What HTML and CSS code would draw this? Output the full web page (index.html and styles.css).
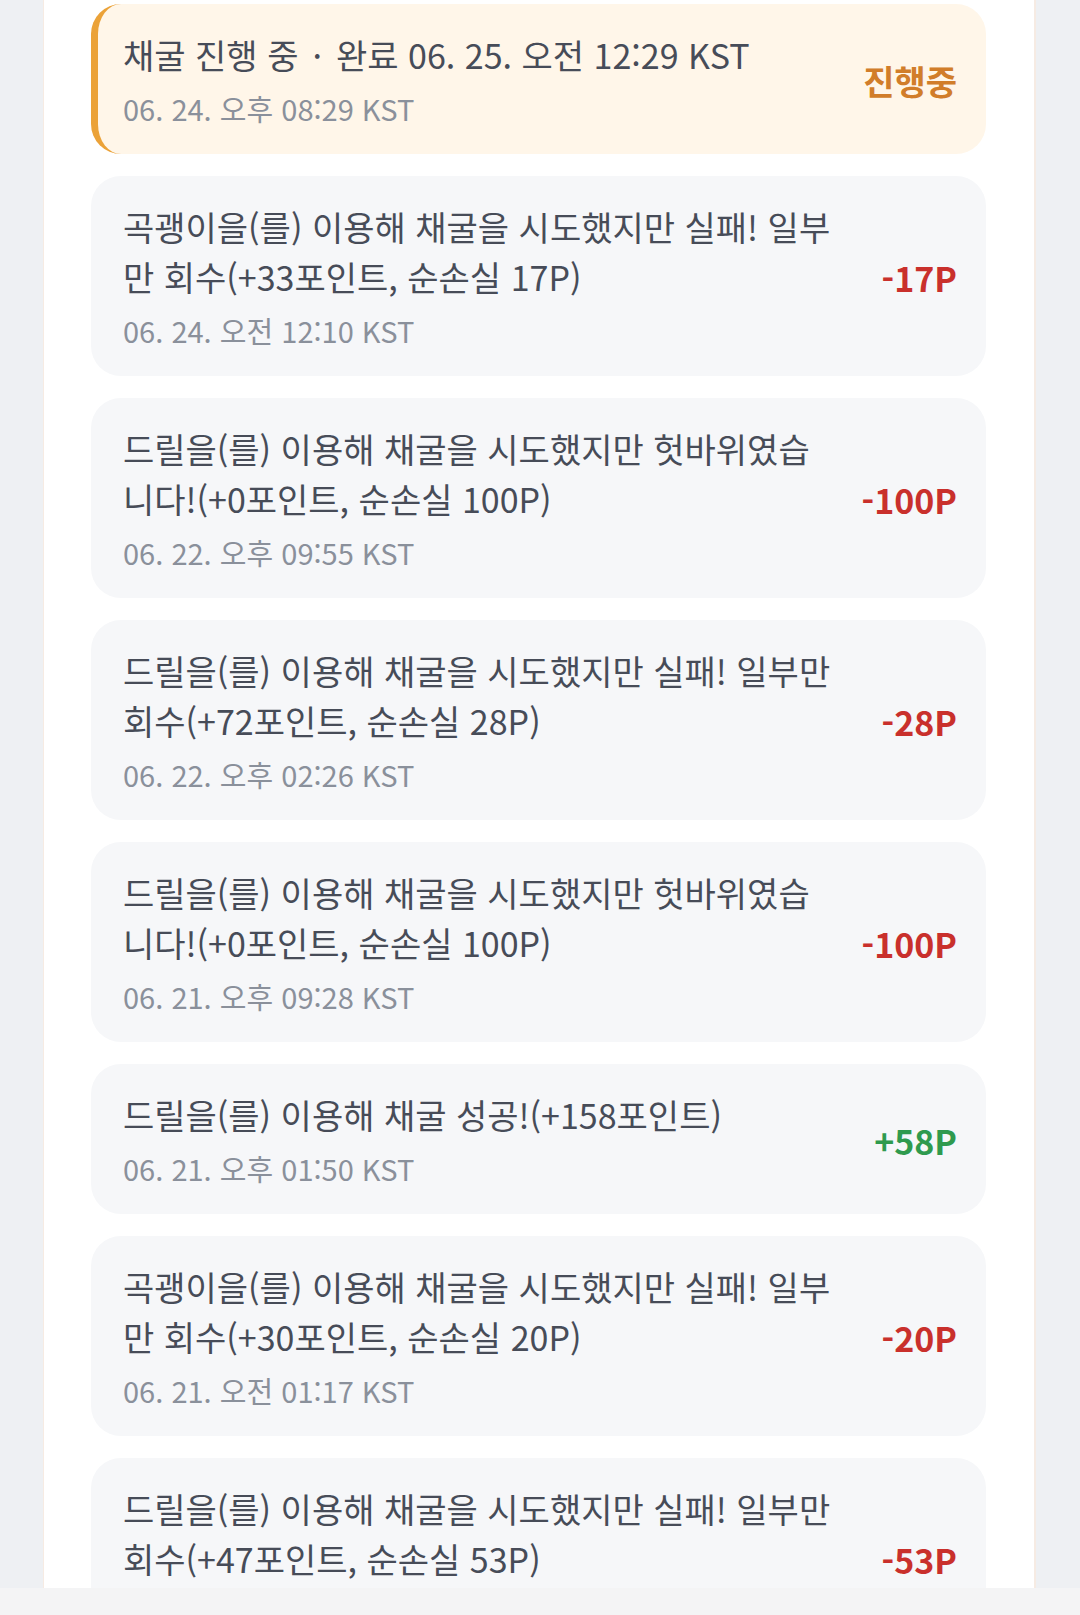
FILE: index.html
```html
<!DOCTYPE html>
<html lang="ko">
<head>
    <meta charset="UTF-8">
    <meta name="viewport" content="width=device-width, initial-scale=1.0">
    <title>채굴 기록</title>
    <link rel="stylesheet" href="styles.css">
</head>
<body>

    <div class="page">
        <div class="panel">
            <div class="log-item active">
                <div class="log-text">
                    <div class="log-desc">채굴 진행 중<span class="dot">·</span>완료 06. 25. 오전 12:29 KST</div>
                    <div class="log-date">06. 24. 오후 08:29 KST</div>
                </div>
                <div class="log-status">진행중</div>
            </div>
            <div class="log-item">
                <div class="log-text">
                    <div class="log-desc">곡괭이을(를) 이용해 채굴을 시도했지만 실패! 일부만 회수(+33포인트, 순손실 17P)</div>
                    <div class="log-date">06. 24. 오전 12:10 KST</div>
                </div>
                <div class="log-amount minus">-17P</div>
            </div>
            <div class="log-item">
                <div class="log-text">
                    <div class="log-desc">드릴을(를) 이용해 채굴을 시도했지만 헛바위였습니다!(+0포인트, 순손실 100P)</div>
                    <div class="log-date">06. 22. 오후 09:55 KST</div>
                </div>
                <div class="log-amount minus">-100P</div>
            </div>
            <div class="log-item">
                <div class="log-text">
                    <div class="log-desc">드릴을(를) 이용해 채굴을 시도했지만 실패! 일부만 회수(+72포인트, 순손실 28P)</div>
                    <div class="log-date">06. 22. 오후 02:26 KST</div>
                </div>
                <div class="log-amount minus">-28P</div>
            </div>
            <div class="log-item">
                <div class="log-text">
                    <div class="log-desc">드릴을(를) 이용해 채굴을 시도했지만 헛바위였습니다!(+0포인트, 순손실 100P)</div>
                    <div class="log-date">06. 21. 오후 09:28 KST</div>
                </div>
                <div class="log-amount minus">-100P</div>
            </div>
            <div class="log-item">
                <div class="log-text">
                    <div class="log-desc">드릴을(를) 이용해 채굴 성공!(+158포인트)</div>
                    <div class="log-date">06. 21. 오후 01:50 KST</div>
                </div>
                <div class="log-amount plus">+58P</div>
            </div>
            <div class="log-item">
                <div class="log-text">
                    <div class="log-desc">곡괭이을(를) 이용해 채굴을 시도했지만 실패! 일부만 회수(+30포인트, 순손실 20P)</div>
                    <div class="log-date">06. 21. 오전 01:17 KST</div>
                </div>
                <div class="log-amount minus">-20P</div>
            </div>
            <div class="log-item">
                <div class="log-text">
                    <div class="log-desc">드릴을(를) 이용해 채굴을 시도했지만 실패! 일부만 회수(+47포인트, 순손실 53P)</div>
                    <div class="log-date">06. 20. 오후 11:02 KST</div>
                </div>
                <div class="log-amount minus">-53P</div>
            </div>
        </div>
    </div>
    <div class="bottom-bar"></div>

</body>
</html>
```

FILE: styles.css
```css
body {
    font-family: "Noto Sans CJK KR", "Noto Sans", sans-serif;
    margin: 0;
    background-color: #eef0f3;
}
.page {
    height: 1588px;
    overflow: hidden;
}
.panel {
    margin-left: 43px;
    width: 993px;
    min-height: 1588px;
    box-sizing: border-box;
    padding: 4px 48px 0 47px;
    background-color: white;
    border-left: 1px solid #f6ebe3;
    border-right: 2px solid #f6ebe3;
    display: flex;
    flex-direction: column;
    gap: 22px;
}
.log-item {
    display: flex;
    align-items: center;
    gap: 32px;
    padding: 26px 29px 24px 32px;
    background-color: #f6f7f9;
    border-radius: 30px;
}
.log-item.active {
    background-color: #fff6e9;
    border-left: 7px solid #eba238;
    padding-left: 25px;
}
.log-text {
    flex: 1;
}
.log-desc {
    font-size: 34px;
    line-height: 50px;
    color: #474c58;
}
.dot {
    margin: 0 14px;
}
.log-date {
    margin-top: 6px;
    font-size: 29px;
    line-height: 44px;
    color: #8a909b;
}
.log-status {
    font-size: 34px;
    font-weight: bold;
    color: #d17d2a;
}
.log-amount {
    font-size: 34px;
    font-weight: bold;
}
.minus {
    color: #c9302c;
}
.plus {
    color: #2f9a4e;
}
.bottom-bar {
    height: 27px;
    background-color: #f4f4f5;
}
```
